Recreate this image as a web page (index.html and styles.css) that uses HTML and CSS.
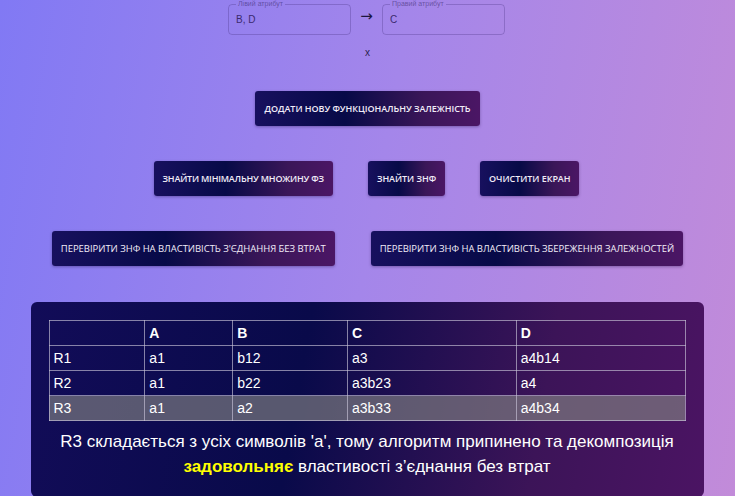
FILE: index.html
```html
<!DOCTYPE html>
<html lang="uk">
<head>
<meta charset="utf-8">
<link rel="stylesheet" href="styles.css">
</head>
<body>
<div class="page">
  <div class="fd-row">
    <fieldset class="field">
      <legend>Лівий атрибут</legend>
      <span class="value">B, D</span>
    </fieldset>
    <span class="arrow">→</span>
    <fieldset class="field">
      <legend>Правий атрибут</legend>
      <span class="value">C</span>
    </fieldset>
  </div>
  <div class="remove">x</div>

  <div class="btn-row row-add">
    <button class="btn">Додати нову функціональну залежність</button>
  </div>
  <div class="btn-row row-mid">
    <button class="btn btn-tight">Знайти мінімальну множину ФЗ</button>
    <button class="btn">Знайти ЗНФ</button>
    <button class="btn">Очистити екран</button>
  </div>
  <div class="btn-row row-check">
    <button class="btn btn-light">Перевірити ЗНФ на властивість з'єднання без втрат</button>
    <button class="btn btn-light">Перевірити ЗНФ на властивість збереження залежностей</button>
  </div>

  <section class="panel">
    <table class="matrix">
      <colgroup>
        <col class="c0"><col class="c1"><col class="c2"><col class="c3"><col class="c4">
      </colgroup>
      <thead>
        <tr><th></th><th>A</th><th>B</th><th>C</th><th>D</th></tr>
      </thead>
      <tbody>
        <tr><td>R1</td><td>a1</td><td>b12</td><td>a3</td><td>a4b14</td></tr>
        <tr><td>R2</td><td>a1</td><td>b22</td><td>a3b23</td><td>a4</td></tr>
        <tr class="hit"><td>R3</td><td>a1</td><td>a2</td><td>a3b33</td><td>a4b34</td></tr>
      </tbody>
    </table>
    <p class="result">R3 складається з усіх символів 'а', тому алгоритм припинено та декомпозиція <strong>задовольняє</strong> властивості з’єднання без втрат</p>
  </section>
</div>
</body>
</html>
```

FILE: styles.css
```css
html, body {
  margin: 0;
  padding: 0;
}
body {
  width: 735px;
  height: 496px;
  overflow: hidden;
  background: linear-gradient(100deg, #8179f4 0%, #a486ea 50%, #c28bd9 100%);
  font-family: "Open Sans", "Noto Sans", sans-serif;
}
.page {
  display: flex;
  flex-direction: column;
  align-items: center;
}
.fd-row {
  display: flex;
  align-items: center;
  gap: 9px;
  margin-top: 0;
  margin-right: 2px;
}
.field {
  box-sizing: border-box;
  width: 123px;
  height: 35px;
  margin: 0;
  padding: 0 8px 0 7px;
  border: 1px solid rgba(60, 40, 120, 0.28);
  border-radius: 4px;
  display: flex;
  align-items: center;
}
.field legend {
  font-family: "Liberation Sans", Arial, sans-serif;
  font-size: 7px;
  color: rgba(50, 30, 100, 0.55);
  padding: 0 2px;
  margin-left: 0;
  line-height: 8px;
}
.value {
  font-family: "Liberation Sans", Arial, sans-serif;
  font-size: 10px;
  color: #3b2a6e;
  margin-top: -4px;
}
.arrow {
  font-family: "DejaVu Sans", sans-serif;
  font-size: 15px;
  color: #1c1540;
  width: 13px;
  text-align: center;
  margin-top: -4px;
}
.remove {
  font-family: "Liberation Sans", Arial, sans-serif;
  font-size: 10px;
  color: #2c2250;
  margin-top: 12px;
  line-height: 12px;
}
.btn-row {
  display: flex;
  justify-content: center;
  gap: 35px;
}
.row-add { margin-top: 32px; }
.row-mid { margin-top: 35px; gap: 35px; margin-right: 2px; }
.row-check { margin-top: 35px; gap: 36px; }
.btn {
  height: 35px;
  padding: 0 9px;
  border: none;
  border-radius: 3px;
  background: linear-gradient(90deg, #17105e 0%, #070a47 40%, #3a1658 75%, #4b1665 100%);
  box-shadow: 0 1px 3px rgba(30, 10, 60, 0.35);
  color: #f1ecf8;
  font-family: "Open Sans", "Noto Sans", sans-serif;
  font-weight: 600;
  font-size: 9px;
  text-transform: uppercase;
  letter-spacing: -0.05px;
  cursor: pointer;
}
.btn-tight {
  letter-spacing: -0.2px;
}
.btn-light {
  font-weight: 400;
  font-size: 9.5px;
  letter-spacing: -0.04px;
}
.panel {
  box-sizing: border-box;
  width: 673px;
  margin-top: 36px;
  height: 195px;
  margin-right: 1px;
  padding: 18px 18px 0;
  border-radius: 6px;
  background: linear-gradient(100deg, #120c58 0%, #090a4a 40%, #3c1458 75%, #4b1463 100%);
}
.matrix {
  width: 637px;
  border-collapse: collapse;
  font-family: "Liberation Sans", Arial, sans-serif;
  font-size: 14px;
  color: #ffffff;
}
.c0 { width: 96px; }
.c1 { width: 88px; }
.c2 { width: 115px; }
.c3 { width: 169px; }
.c4 { width: 169px; }
.matrix th, .matrix td {
  border: 1px solid rgba(200, 195, 215, 0.65);
  height: 24px;
  padding: 0 4px;
  text-align: left;
}
.matrix th { font-weight: bold; }
.matrix tr.hit td {
  background: rgba(130, 130, 130, 0.65);
}
.result {
  margin: 8px 0 0;
  text-align: center;
  font-family: "Liberation Sans", Arial, sans-serif;
  font-size: 17px;
  line-height: 25px;
  color: #ffffff;
}
.result strong {
  color: #ffff00;
}
```
